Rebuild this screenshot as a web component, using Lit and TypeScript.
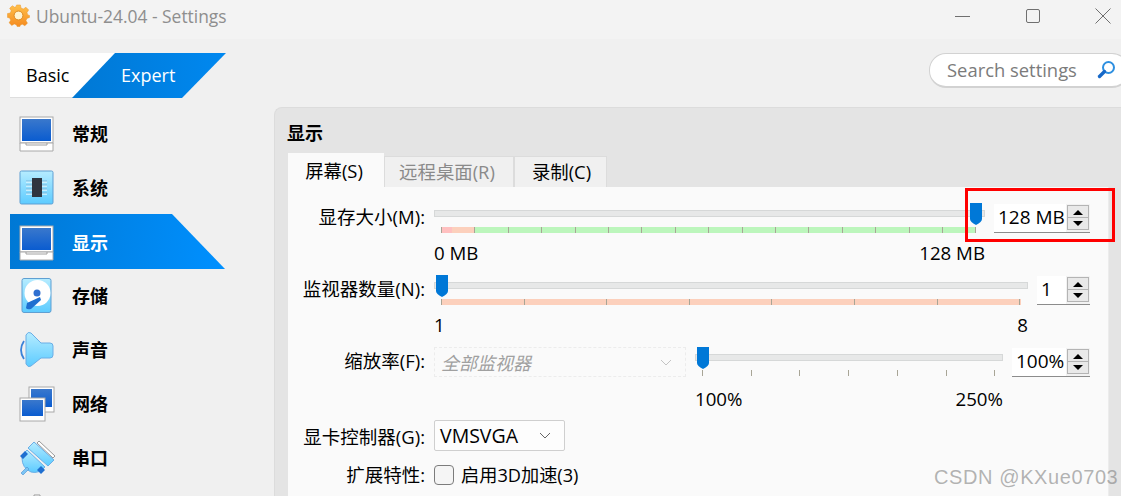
import { LitElement, html, css, svg } from "lit";
import { customElement, property } from "lit/decorators.js";

@customElement("vb-slider")
class VbSlider extends LitElement {
  @property({ type: Number }) w = 0;
  @property({ type: Number }) thumb = 0;
  @property({ type: Array }) ticks: number[] = [];
  @property({ type: Array }) bands: { x: number; w: number; c: string }[] = [];
  @property() minL = "";
  @property() maxL = "";
  static styles = css`
    :host { display: block; position: relative; }
    .track { height: 7px; box-sizing: border-box; margin-top: 7px; background: #e7e8e8; border: 1px solid #d6d8d8; }
    .scale { position: relative; height: 6px; margin-top: 10px; }
    :host([zoomed]) .scale { margin-top: 9px; }
    .band, .tick { position: absolute; top: 0; height: 6px; }
    .tick { width: 1px; background: #a8a596; }
    .thumb { position: absolute; top: 0; width: 12px; height: 22px; }
    .labels { display: flex; justify-content: space-between; margin-top: 8px; font-size: 18.7px; line-height: 24px; color: #000; }
    :host([zoomed]) .labels { margin-top: 11px; }
  `;
  render() {
    return html`<div style="width:${this.w}px">
      <div class="track"></div>
      <div class="scale">
        ${this.bands.map((b) => html`<div class="band" style="left:${b.x}px;width:${b.w}px;background:${b.c}"></div>`)}
        ${this.ticks.map((t) => html`<div class="tick" style="left:${t}px"></div>`)}
      </div>
      <div class="labels"><span>${this.minL}</span><span>${this.maxL}</span></div>
      <svg class="thumb" style="left:${this.thumb}px" viewBox="0 0 12 22"><path d="M0 0H12V16Q12 19 6 22Q0 19 0 16Z" fill="#0078d7"/></svg>
    </div>`;
  }
}

@customElement("vb-spin")
class VbSpin extends LitElement {
  @property() value = "";
  @property({ type: Number }) w = 0;
  static styles = css`
    :host { display: block; }
    .box { display: flex; height: 29px; box-sizing: border-box; background: #f2f2f2; border-bottom: 1px solid #8c8c8c; }
    .val { flex: 1; height: 28px; background: #fff; font-size: 19px; line-height: 27px; padding-left: 4px; color: #000; white-space: nowrap; }
    .btns { width: 22px; margin: 1px 1px 0 1px; display: flex; flex-direction: column; height: 25px; }
    .btn { height: 13px; box-sizing: border-box; background: #e9e9e9; border: 1px solid #b4b4b4; display: flex; align-items: center; justify-content: center; }
    .btn + .btn { margin-top: -1px; }
    svg { width: 12px; height: 6px; display: block; }
  `;
  render() {
    return html`<div class="box" style="width:${this.w}px">
      <div class="val">${this.value}</div>
      <div class="btns">
        <div class="btn"><svg viewBox="0 0 12 6"><path d="M1 6L6 1L11 6Z"/></svg></div>
        <div class="btn"><svg viewBox="0 0 12 6"><path d="M1 0L6 5L11 0Z"/></svg></div>
      </div>
    </div>`;
  }
}

const monitor = svg`<rect x="1" y="1" width="33" height="26" fill="#fff" stroke="#a8a8a8"/>
  <rect x="3" y="3" width="29" height="22" fill="url(#scr)"/>
  <path d="M1 27H34V35H1Z" fill="#fff" stroke="#a8a8a8"/><path d="M7 27V29H28V27" fill="none" stroke="#a0a0a0"/>`;

const icons: Record<string, unknown> = {
  general: monitor,
  system: svg`<rect x="1" y="1" width="33" height="33" rx="1.5" fill="url(#sky)" stroke="#5f9fd2"/>
    <path d="M7 11H28M7 15H28M7 19H28M7 23H28" stroke="#7fb8dc" stroke-width="1.2"/>
    <path d="M7 12.2H28M7 16.2H28M7 20.2H28M7 24.2H28" stroke="#e4f8ff" stroke-width="1"/>
    <rect x="13" y="8" width="10" height="19" fill="#2f3540"/>`,
  storage: svg`<rect x="3" y="0.5" width="29" height="34" rx="2" fill="url(#sky)" stroke="#5f9fd2"/>
    <circle cx="18.5" cy="15" r="13" fill="#fff"/><circle cx="18" cy="15" r="3.5" fill="#2f6fd0"/>
    <path d="M7 30L8 25L21 19L22 22L12 31Q8 32 7 30Z" fill="#1f6fd0"/>`,
  audio: svg`<path d="M7 3Q9 -1 12 1L22 11H31Q34 11 34 14V23Q34 26 31 26H22L12 34Q9 36 7 32Z" fill="url(#sky)" stroke="#6aaee6"/>
    <path d="M5 9Q-1 18 5 27" fill="none" stroke="#3b82d8" stroke-width="1.8"/>`,
  network: svg`<rect x="10" y="1" width="25" height="25" fill="#fff" stroke="#a8a8a8"/><rect x="12" y="3" width="21" height="18" fill="url(#scr)"/>
    <rect x="1" y="12" width="25" height="23" fill="#fff" stroke="#a8a8a8"/><rect x="3" y="14" width="21" height="16" fill="url(#scr)"/>`,
  serial: svg`<path d="M15 2L35 20L29 26L9 8Z" fill="url(#sky)" stroke="#6aaee6"/>
    <path d="M20 1L36 16L34 18L18 3Z" fill="#fff" stroke="#999"/>
    <path d="M8 10L26 27Q20 34 12 32Q3 28 3 18Q4 13 8 10Z" fill="url(#sky)" stroke="#6aaee6"/>
    <path d="M1 16L6 11L9 14L4 19ZM18 30L22 26L26 30L22 34Z" fill="#1f6fd0"/>
    <path d="M2 33L8 27L10 29L4 35Z" fill="#7cc5f5" stroke="#4a90d0" stroke-width=".6"/>`,
  usb: svg`<path d="M15 1H21V12H15Z" fill="#fff" stroke="#9a9a9a"/>`,
};

const NAV = [
  ["general", "常规"], ["system", "系统"], ["general", "显示"], ["storage", "存储"],
  ["audio", "声音"], ["network", "网络"], ["serial", "串口"], ["usb", ""],
];

const range = (start: number, step: number, n: number) =>
  Array.from({ length: n }, (_, i) => Math.round(start + step * i));

@customElement("app-root")
class AppRoot extends LitElement {
  static styles = css`
    :host { display: block; width: 1121px; height: 496px; overflow: hidden; position: relative; font-family: "Open Sans","Noto Sans CJK SC",sans-serif; background: #f0f0f0; color: #000; }
    .titlebar { height: 39px; background: #f3f3f3; display: flex; align-items: center; padding-left: 7px; }
    .gear { width: 23px; height: 23px; margin-top: -8px; }
    .title { margin-left: 6px; font-size: 17.4px; color: #8e8e8e; margin-top: -7px; white-space: nowrap; }
    .ctl { margin-left: auto; display: flex; margin-top: -7px; padding-right: 10px; }
    .ctl svg { width: 16px; height: 16px; display: block; stroke: #6f6f6f; fill: none; }
    .ctl svg + svg { margin-left: 54px; }
    .main { display: flex; height: 457px; }
    .side { width: 274px; flex: none; padding-top: 14px; box-sizing: border-box; }
    .seg { margin-left: 10px; width: 216px; height: 45px; display: flex; }
    .seg .basic { width: 105px; background: #fff; font-size: 18px; line-height: 45px; padding-left: 16px; box-sizing: border-box; border-bottom: 1px solid #dedede; }
    .seg .expert { width: 154px; margin-left: -43px; background: linear-gradient(90deg, #0078d4, #0088f0); color: #fff; font-size: 18px; line-height: 45px; padding-left: 49px; box-sizing: border-box; clip-path: polygon(43px 0, 100% 0, 110px 100%, 0 100%); }
    .nav { margin-top: 9px; }
    .item { height: 54px; display: flex; align-items: center; padding-left: 19px; font-size: 18px; font-weight: 700; }
    .item svg { width: 36px; height: 36px; flex: none; display: block; }
    .item span { margin-left: 17px; margin-top: -2px; }
    .item.sel { margin-left: 10px; margin-top: -1px; padding-left: 9px; padding-top: 2px; width: 215px; box-sizing: border-box; color: #fff; height: 55px; background: linear-gradient(100deg, #0078d4, #0090ff); clip-path: polygon(0 0, 162px 0, 100% 100%, 0 100%); }
    .right { flex: 1; min-width: 0; display: flex; flex-direction: column; }
    .searchrow { height: 68px; padding-top: 14px; box-sizing: border-box; padding-left: 655px; flex: none; }
    .search { width: 200px; height: 35px; box-sizing: border-box; background: #fff; border: 1px solid #d2d2d2; border-bottom-width: 2px; border-radius: 17px; display: flex; align-items: center; padding: 0 0 2px 17px; font-size: 18.4px; color: #7b7b7b; white-space: nowrap; }
    .search svg { width: 19px; height: 19px; margin-left: 20px; flex: none; }
    .panel { flex: 1; background: #e4e4e4; border-radius: 8px 0 0 0; border-top: 1px solid #dcdcdc; border-left: 1px solid #dcdcdc; padding-left: 13px; box-sizing: border-box; }
    .h { font-size: 18px; font-weight: 700; line-height: 24px; margin-top: 13px; margin-left: -1px; }
    .tabs { display: flex; align-items: flex-end; margin-top: 8px; height: 34px; }
    .tab { height: 31px; box-sizing: border-box; background: #f0f0f0; border: 1px solid #dcdcdc; border-bottom: none; font-size: 18.4px; line-height: 29px; text-align: center; white-space: nowrap; }
    .tab.on { height: 34px; width: 96px; background: #fafafa; border: none; line-height: 35px; padding-right: 4px; box-sizing: border-box; }
    .tab.off { color: #8a8a8a; width: 130px; padding-right: 4px; }
    .tab.rec { width: 93px; padding-left: 2px; }
    .page { width: 821px; height: 400px; background: #fafafa; padding-top: 16px; box-sizing: border-box; border-right: 1px solid #ececec; }
    .row { display: grid; grid-template-columns: 137px 1fr; column-gap: 9px; font-size: 18.5px; }
    .lab { text-align: right; line-height: 28px; white-space: nowrap; }
    .lab.tall { line-height: 34px; }
    .ctrl { display: flex; align-items: flex-start; }
    .r1 { height: 72px; }
    .r2 { height: 72px; }
    .r3 { height: 73px; }
    .r4 { height: 41px; }
    .sp { margin-left: 9px; margin-top: 1px; }
    .gap { margin-left: 9px; }
    .combo { box-sizing: border-box; display: flex; align-items: center; font-size: 18px; white-space: nowrap; }
    .combo.dis { width: 252px; height: 30px; border: 1px dashed #ececec; color: #a0a0a0; font-style: italic; padding-left: 6px; }
    .combo.en { width: 131px; height: 31px; border: 1px solid #cfcfcf; border-radius: 2px; background: #fdfdfd; padding-left: 5px; font-size: 19.5px; }
    .combo svg { width: 12px; height: 7px; fill: none; margin-left: auto; margin-right: 13px; }
    .combo.dis svg { stroke: #c4c4c4; }
    .combo.en svg { stroke: #666; }
    .chk { display: flex; align-items: center; line-height: 28px; font-size: 18.2px; }
    .box { width: 20px; height: 20px; box-sizing: border-box; border: 1px solid #7c7c7c; border-radius: 4px; background: #f5f5f5; margin-right: 7px; }
    .mark { position: absolute; left: 965px; top: 188px; width: 150px; height: 54px; box-sizing: border-box; border: 3px solid #f00; pointer-events: none; }
    .wm { position: absolute; left: 934px; top: 466px; font-family: "Liberation Sans", sans-serif; font-size: 20px; letter-spacing: 0.6px; color: rgba(130,130,130,.6); white-space: nowrap; }
  `;

  render() {
    return html`
      <svg width="0" height="0" style="position:absolute"><defs>
        <linearGradient id="scr" x1="0" y1="0" x2="0" y2="1"><stop offset="0" stop-color="#3a78cc"/><stop offset="1" stop-color="#0a5cd0"/></linearGradient>
        <linearGradient id="sky" x1="0" y1="0" x2="0" y2="1"><stop offset="0" stop-color="#b6ecff"/><stop offset="1" stop-color="#5ccbff"/></linearGradient>
        <linearGradient id="gold" x1="0" y1="0" x2="0" y2="1"><stop offset="0" stop-color="#ffc04a"/><stop offset="1" stop-color="#f58a1f"/></linearGradient>
      </defs></svg>
      <div class="titlebar">
        <svg class="gear" viewBox="0 0 24 24"><path d="M10 1H14L14.6 4.2L17 5.2L19.8 3.4L22.6 6.2L20.8 9L21.8 11.4L23.5 12L23.5 14L20.8 15L19.8 17.4L21.4 20L18.6 22.6L16 21L14 22L13.5 23.5H10.5L10 21.8L7.6 20.8L5 22.4L2.2 19.6L3.8 17L2.8 14.6L0.5 14V10L3.4 9.4L4.4 7L2.8 4.4L5.6 1.8L8 3.4L9.4 2.8Z" fill="url(#gold)" stroke="#e8962a" stroke-width=".5"/><circle cx="12" cy="12" r="4.6" fill="#fff3d0" stroke="#d98820"/></svg>
        <div class="title">Ubuntu-24.04 - Settings</div>
        <div class="ctl">
          <svg viewBox="0 0 16 16"><path d="M0 8.5H15"/></svg>
          <svg viewBox="0 0 16 16"><rect x="1.5" y="1.5" width="13" height="13" rx="1.5"/></svg>
          <svg viewBox="0 0 16 16"><path d="M.5 .5L15.5 15.5M15.5 .5L.5 15.5"/></svg>
        </div>
      </div>
      <div class="main">
        <div class="side">
          <div class="seg"><div class="basic">Basic</div><div class="expert">Expert</div></div>
          <div class="nav">
            ${NAV.map(([ic, t], i) => html`<div class="item ${i === 2 ? "sel" : ""}"><svg viewBox="0 0 36 36">${icons[ic]}</svg>${t ? html`<span>${t}</span>` : ""}</div>`)}
          </div>
        </div>
        <div class="right">
          <div class="searchrow">
            <div class="search">Search settings
              <svg viewBox="0 0 19 19"><circle cx="11.5" cy="7.5" r="5.5" fill="#fff" stroke="#2d8fe0" stroke-width="2"/><path d="M7.5 11.5L2.5 16.5" stroke="#1668c8" stroke-width="3.4" stroke-linecap="round"/></svg>
            </div>
          </div>
          <div class="panel">
            <div class="h">显示</div>
            <div class="tabs">
              <div class="tab on">屏幕(S)</div>
              <div class="tab off">远程桌面(R)</div>
              <div class="tab rec">录制(C)</div>
            </div>
            <div class="page">
              <div class="row r1">
                <div class="lab">显存大小(M):</div>
                <div class="ctrl">
                  <vb-slider .w=${551} .thumb=${536} .ticks=${range(7, 33.4, 17)} .minL=${"0 MB"} .maxL=${"128 MB"}
                    .bands=${[{ x: 7, w: 11, c: "#ffc0c0" }, { x: 18, w: 23, c: "#fcd0bc" }, { x: 41, w: 501, c: "#bcf6bc" }]}></vb-slider>
                  <vb-spin class="sp" .value=${"128 MB"} .w=${96}></vb-spin>
                </div>
              </div>
              <div class="row r2">
                <div class="lab">监视器数量(N):</div>
                <div class="ctrl">
                  <vb-slider .w=${594} .thumb=${2} .ticks=${range(7, 82.6, 8)} .minL=${" 1"} .maxL=${"8 "}
                    .bands=${[{ x: 7, w: 580, c: "#fcd0bc" }]}></vb-slider>
                  <vb-spin class="sp" .value=${"1"} .w=${53}></vb-spin>
                </div>
              </div>
              <div class="row r3">
                <div class="lab">缩放率(F):</div>
                <div class="ctrl">
                  <div class="combo dis">全部监视器<svg viewBox="0 0 12 7"><path d="M1 1L6 6L11 1"/></svg></div>
                  <vb-slider class="gap" zoomed .w=${308} .thumb=${2} .ticks=${range(7, 48.7, 7)} .minL=${"100%"} .maxL=${"250%"} .bands=${[]}></vb-slider>
                  <vb-spin class="sp" .value=${"100%"} .w=${78}></vb-spin>
                </div>
              </div>
              <div class="row r4">
                <div class="lab tall">显卡控制器(G):</div>
                <div class="ctrl"><div class="combo en">VMSVGA<svg viewBox="0 0 12 7"><path d="M1 1L6 6L11 1"/></svg></div></div>
              </div>
              <div class="row">
                <div class="lab">扩展特性:</div>
                <div class="chk"><div class="box"></div>启用3D加速(3)</div>
              </div>
            </div>
          </div>
        </div>
      </div>
      <div class="mark"></div>
      <div class="wm">CSDN @KXue0703</div>
    `;
  }
}
void VbSlider; void VbSpin; void AppRoot;
